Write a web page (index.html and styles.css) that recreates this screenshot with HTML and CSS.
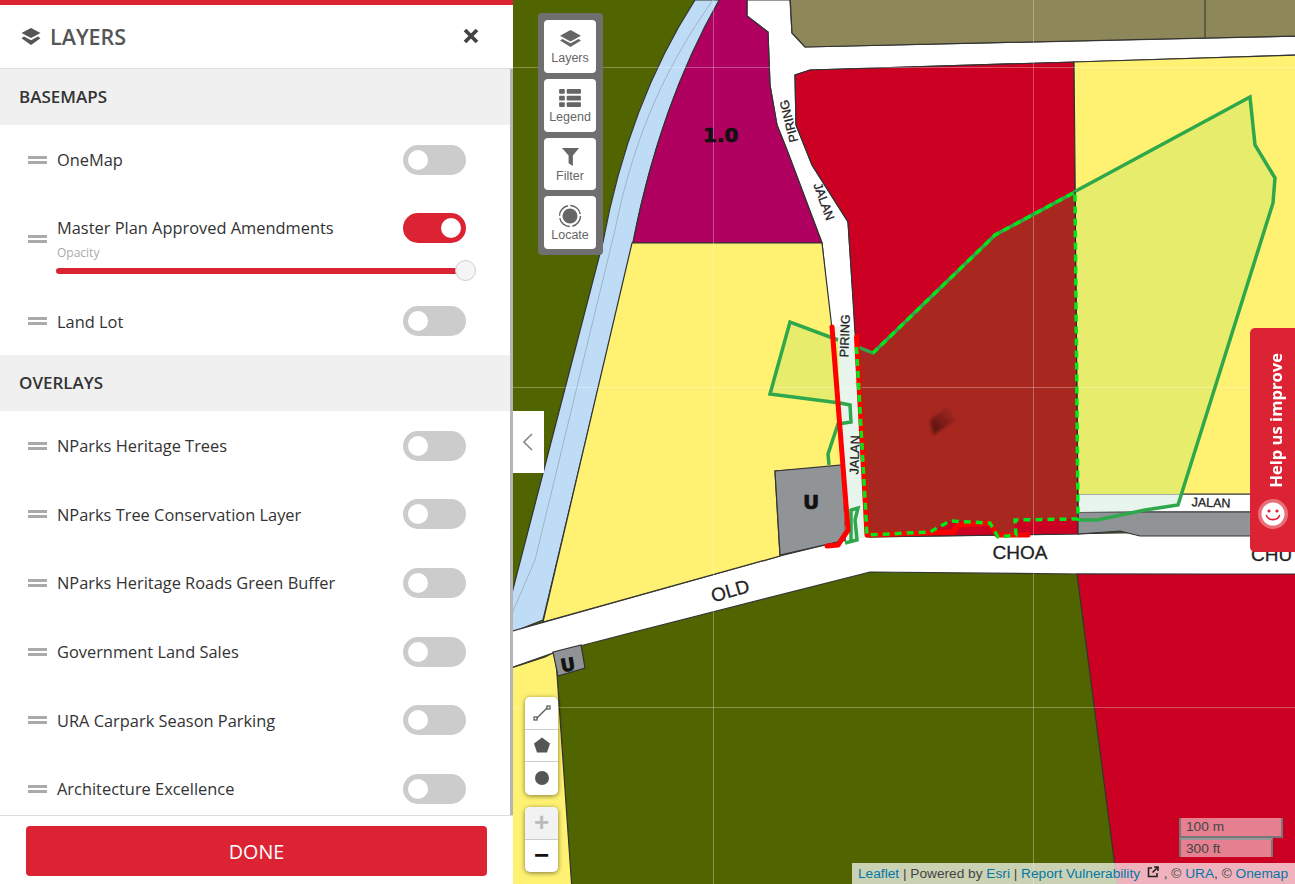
FILE: index.html
```html
<!DOCTYPE html>
<html lang="en">

<head>
    <meta charset="UTF-8">
    <meta name="viewport" content="width=device-width, initial-scale=1.0">
    <title>Layers</title>
    <link rel="stylesheet" href="styles.css">
</head>

<body>
    <div class="app">
        <!-- side panel -->
        <div class="panel">
            <div class="panel-head">
                <div class="panel-title">
                    <svg class="title-icon" viewBox="0 0 20 17">
                        <path d="M10 0l9.5 5L10 10 .5 5z" />
                        <path d="M3 8.6l7 3.6 7-3.6 2.5 1.6L10 17 .5 10.2z" />
                    </svg>
                    LAYERS
                </div>
                <svg class="close-icon" viewBox="0 0 16 16">
                    <path d="M2 2l12 12M14 2L2 14" />
                </svg>
            </div>
            <div class="panel-list">
                <div class="section">BASEMAPS</div>
                <div class="row">
                    <div class="handle"></div>
                    <div class="row-body">
                        <div class="row-top"><span>OneMap</span>
                            <div class="toggle"></div>
                        </div>
                    </div>
                </div>
                <div class="row row-open">
                    <div class="handle"></div>
                    <div class="row-body">
                        <div class="row-top"><span>Master Plan Approved Amendments</span>
                            <div class="toggle on"></div>
                        </div>
                        <div class="opacity-label">Opacity</div>
                        <div class="slider">
                            <div class="slider-thumb"></div>
                        </div>
                    </div>
                </div>
                <div class="row">
                    <div class="handle"></div>
                    <div class="row-body">
                        <div class="row-top"><span>Land Lot</span>
                            <div class="toggle"></div>
                        </div>
                    </div>
                </div>
                <div class="section">OVERLAYS</div>
                <div class="row">
                    <div class="handle"></div>
                    <div class="row-body">
                        <div class="row-top"><span>NParks Heritage Trees</span>
                            <div class="toggle"></div>
                        </div>
                    </div>
                </div>
                <div class="row">
                    <div class="handle"></div>
                    <div class="row-body">
                        <div class="row-top"><span>NParks Tree Conservation Layer</span>
                            <div class="toggle"></div>
                        </div>
                    </div>
                </div>
                <div class="row">
                    <div class="handle"></div>
                    <div class="row-body">
                        <div class="row-top"><span>NParks Heritage Roads Green Buffer</span>
                            <div class="toggle"></div>
                        </div>
                    </div>
                </div>
                <div class="row">
                    <div class="handle"></div>
                    <div class="row-body">
                        <div class="row-top"><span>Government Land Sales</span>
                            <div class="toggle"></div>
                        </div>
                    </div>
                </div>
                <div class="row">
                    <div class="handle"></div>
                    <div class="row-body">
                        <div class="row-top"><span>URA Carpark Season Parking</span>
                            <div class="toggle"></div>
                        </div>
                    </div>
                </div>
                <div class="row">
                    <div class="handle"></div>
                    <div class="row-body">
                        <div class="row-top"><span>Architecture Excellence</span>
                            <div class="toggle"></div>
                        </div>
                    </div>
                </div>
            </div>
            <div class="panel-foot">
                <div class="done-btn">DONE</div>
            </div>
        </div>

        <!-- map -->
        <div class="map">
            <svg class="map-art" viewBox="513 0 782 884">
                <defs>
                    <filter id="soft">
                        <feGaussianBlur stdDeviation="1.5" />
                    </filter>
                    <linearGradient id="blob" x1="0" y1="1" x2="1" y2="0">
                        <stop offset="0.2" stop-color="#641410" />
                        <stop offset="0.9" stop-color="#a82820" />
                    </linearGradient>
                </defs>
                <rect x="513" y="0" width="782" height="884" fill="#506400" />

                <!-- river -->
                <path class="edge" fill="#bedcf5" d="M695 0H722C690 50 655 130 633 242L543 620 505 635V620L603 242C620 150 650 70 695 0z" />
                <path fill="none" stroke="#9fb4c4" stroke-width="1" d="M713 0C670 60 635 130 615 230L535 560 505 630" />

                <!-- roads -->
                <path class="edge" fill="#fff" d="M747 0H790L792 33 805 47 1300 36V55L1074 62 810 70 795 75 796 125 812 165 848 222 856 340 870 537 1300 530V575L1080 574 870 572 630 633 553 653 505 670V633L780 556 845 540 830 320 822 243 787 150 777 125 770 85 768 32 747 16z" />
                <path class="edge" fill="#fff" d="M1078 494H1300V512H1078z" />

                <!-- zones -->
                <path class="edge" fill="#8d8759" d="M790 -5H1300V36L1205 38 805 47 792 33z" />
                <path fill="none" stroke="#333" stroke-width="1" d="M1205 0V38" />
                <path class="edge" fill="#b00060" d="M720 -5H747V16L768 32 770 85 777 125 787 150 822 243H633C655 130 690 50 722 -5z" />
                <path class="edge" fill="#cc0022" d="M795 75L810 70 1074 62 1078 534 867 537 853 300 848 222 812 165 796 125z" />
                <path class="edge" fill="#fff272" d="M1074 62L1300 55V494H1078z" />
                <path class="edge" fill="#fff272" d="M632 243H822L831 320 845 466 775 471 780 556 543 622z" />
                <path class="edge" fill="#909496" d="M1078 512H1300V536H1140L1120 531 1078 534z" />
                <path class="edge" fill="#cc0022" d="M1077 574H1300V890H1118z" />
                <path class="edge" fill="#909496" d="M775 471L842 465 846 540 780 555z" />
                <path class="edge" fill="#fff272" d="M505 670L545 657 553 653 556 660 572 890H505z" />
                <path class="edge" fill="#909496" d="M553 652L581 645 585 668 558 676z" />
                <path fill="#e8f5ec" d="M833 325L854 330 868 537 846 541z" />
                <path fill="#e8f5ec" d="M1079 494.5H1181L1178 505 1145 511 1079 512z" />

                <!-- selected area -->
                <path fill="#e8ec6c" d="M1076 192L1250 97 1255 145 1275 178 1273 203 1181 494 1079 494z" />
                <path fill="#e8ec6c" d="M790 322L838 340 840 403 770 394z" />
                <path fill="#a82820" d="M858 347L873 353 995 235 1075 192 1078 519 1015 520 1015 536 1000 536 990 522 950 521 935 530 870 536z" />
                <path d="M930 420L933 435 957 420 947 407z" fill="url(#blob)" filter="url(#soft)" />

                <!-- grid -->
                <path fill="none" stroke="#fff" stroke-opacity=".3" d="M513 67.5H1295M513 387.5H1295M513 707.5H1295M713.5 0V884M1033.5 0V884" />

                <!-- green outlines -->
                <path class="green" d="M1074 192L1250 97 1255 145 1275 178 1273 203 1178 505 1145 510 1097 520 1078 520" />
                <path class="green" d="M838 340L790 322 770 394 840 403 850 405 851 422 838 424 828 454 829 465" />
                <path class="green" d="M851 540L851 510 858 508 855 520 857 540 845 543" />
                <path class="green" d="M858 347L873 353 995 235 1075 192" />
                <path fill="none" stroke="#222" stroke-width="1" d="M1075 192L1078 519" />

                <!-- red lines -->
                <path class="red" d="M832 327L848 530 838 545 827 546" />
                <path class="red" d="M856.5 337L867 535 953 532 958 525 990 523 997 535 1028 535" />
                <path class="dash" d="M856.5 347L867 535 930 532 950 521 990 523 998 537 1016 535 1015 520 1078 519 1075 192 995 235 873 353" />

                <!-- road labels -->
                <text class="road-big" x="703" y="142">1.0</text>
                <text class="road" transform="translate(793 120) rotate(-104)" text-anchor="middle">PIRING</text>
                <text class="road" transform="translate(820 203) rotate(70)" text-anchor="middle">JALAN</text>
                <text class="road" transform="translate(849 336) rotate(-88)" text-anchor="middle">PIRING</text>
                <text class="road" transform="translate(859 455) rotate(-88)" text-anchor="middle">JALAN</text>
                <text class="road" x="1211" y="507" text-anchor="middle" transform="rotate(2 1211 503)">JALAN</text>
                <text class="road-name" x="1020" y="559" text-anchor="middle">CHOA</text>
                <text class="road-name" x="1251" y="561">CHU</text>
                <text class="road-name" transform="translate(732 597) rotate(-16)" text-anchor="middle">OLD</text>
                <text class="road-big" x="803" y="509">U</text>
                <text class="road-big small" transform="translate(569 671) rotate(-10)" text-anchor="middle">U</text>
            </svg>

            <div class="collapse-tab">
                <svg viewBox="0 0 10 18">
                    <path d="M9 1L1 9l8 8" />
                </svg>
            </div>

            <div class="toolbar">
                <div class="tool">
                    <svg viewBox="0 0 24 20">
                        <path d="M12 0l11 6-11 6L1 6z" />
                        <path d="M3.5 9.5l8.5 4.5 8.5-4.5L23 11l-11 7L1 11z" />
                    </svg>
                    <span>Layers</span>
                </div>
                <div class="tool">
                    <svg viewBox="0 0 24 20">
                        <rect x="0" y="0" width="6" height="5" rx="1" />
                        <rect x="8" y="0" width="15" height="5" rx="1" />
                        <rect x="0" y="7" width="6" height="5" rx="1" />
                        <rect x="8" y="7" width="15" height="5" rx="1" />
                        <rect x="0" y="14" width="6" height="5" rx="1" />
                        <rect x="8" y="14" width="15" height="5" rx="1" />
                    </svg>
                    <span>Legend</span>
                </div>
                <div class="tool">
                    <svg viewBox="0 0 24 20">
                        <path d="M3 0H21L14.5 8V19L10 16V8z" />
                    </svg>
                    <span>Filter</span>
                </div>
                <div class="tool">
                    <svg viewBox="0 0 24 24" class="locate">
                        <circle cx="12" cy="12" r="7.5" />
                        <circle cx="12" cy="12" r="10.5" fill="none" stroke="#666" stroke-width="1.4" stroke-dasharray="14 2.5" />
                    </svg>
                    <span>Locate</span>
                </div>
            </div>

            <div class="map-btns draw-btns">
                <div class="map-btn">
                    <svg viewBox="0 0 18 18" class="line-icon">
                        <path d="M3 15L15 3" />
                        <rect x="1" y="13" width="3" height="3" />
                        <rect x="14" y="2" width="3" height="3" />
                    </svg>
                </div>
                <div class="map-btn">
                    <svg viewBox="0 0 18 18">
                        <path d="M9 1.5L17 7.5 14 16.5 4 16.5 1 7.5z" />
                    </svg>
                </div>
                <div class="map-btn">
                    <svg viewBox="0 0 18 18">
                        <circle cx="9" cy="9" r="7" />
                    </svg>
                </div>
            </div>

            <div class="map-btns zoom-btns">
                <div class="map-btn zoom-in">+</div>
                <div class="map-btn zoom-out">&minus;</div>
            </div>

            <div class="help-tab">
                <span class="help-text">Help us improve</span>
                <svg class="smiley" viewBox="0 0 30 30">
                    <circle cx="15" cy="15" r="15" fill="#fff" fill-opacity=".35" />
                    <circle cx="15" cy="15" r="11.5" fill="#fff" />
                    <circle cx="11" cy="12" r="1.6" fill="#dc2334" />
                    <circle cx="19" cy="12" r="1.6" fill="#dc2334" />
                    <path d="M8.5 16.5c2 5.5 11 5.5 13 0" fill="none" stroke="#dc2334" stroke-width="1.6" stroke-linecap="round" />
                </svg>
            </div>

            <div class="scale">
                <div class="scale-line scale-m">100 m</div>
                <div class="scale-line scale-ft">300 ft</div>
            </div>

            <div class="attribution">
                <a>Leaflet</a> | Powered by <a>Esri</a> | <a>Report Vulnerability</a>
                <svg class="ext-icon" viewBox="0 0 12 12">
                    <path d="M5 2H1.5v8.5H10V7M7 1h4v4M11 1L5.5 6.5" />
                </svg>
                , &copy; <a>URA</a>, &copy; <a>Onemap</a>
            </div>
        </div>
    </div>
</body>

</html>
```

FILE: styles.css
```css
* {
    margin: 0;
    padding: 0;
    box-sizing: border-box;
}

body {
    font-family: "Open Sans", "Noto Sans", sans-serif;
    color: #333;
    overflow: hidden;
}

.app {
    display: flex;
    height: 884px;
}

/* panel */
.panel {
    flex: 0 0 513px;
    display: flex;
    flex-direction: column;
    background-color: #fff;
    border-top: 5px solid #dc2334;
}

.panel-head {
    flex: 0 0 64px;
    display: flex;
    align-items: center;
    justify-content: space-between;
    padding: 0 34px 1px 21px;
    border-bottom: 1px solid #ddd;
}

.panel-title {
    display: flex;
    align-items: center;
    gap: 9px;
    font-size: 21.5px;
    font-weight: 600;
    color: #555;
}

.title-icon {
    width: 20px;
    height: 17px;
    fill: #555;
}

.close-icon {
    width: 16px;
    height: 16px;
    fill: none;
    stroke: #444;
    stroke-width: 3.8;
}

.panel-list {
    flex: 1;
    min-height: 0;
    overflow: hidden;
    border-right: 3px solid #b5b5b5;
}

.section {
    height: 56px;
    line-height: 56px;
    padding-left: 19px;
    font-size: 17px;
    font-weight: 600;
    color: #333;
    background-color: #f0f0f0;
}

.row {
    display: flex;
    align-items: center;
    height: 68.6px;
    padding: 1.4px 44px 0 28px;
}

.row-open {
    align-items: flex-start;
    height: 92.6px;
    padding-top: 19px;
}

.row-open .handle {
    margin-top: 22px;
}

.handle {
    flex: 0 0 19px;
    height: 8px;
    margin-right: 9px;
    border-top: 3px solid #aaa;
    border-bottom: 3px solid #aaa;
}

.row-body {
    flex: 1;
    font-size: 16.4px;
    color: #333;
}

.row-top {
    display: flex;
    align-items: center;
    justify-content: space-between;
}

.row-top span {
    margin-left: 1px;
}

.toggle {
    position: relative;
    width: 63px;
    height: 30px;
    border-radius: 15px;
    background-color: #ccc;
}

.toggle::after {
    content: "";
    position: absolute;
    top: 5px;
    left: 5px;
    width: 20px;
    height: 20px;
    border-radius: 50%;
    background-color: #fff;
}

.toggle.on {
    background-color: #dc2334;
}

.toggle.on::after {
    left: 38px;
}

.opacity-label {
    margin: 2px 0 0 1px;
    font-size: 12px;
    line-height: 16px;
    color: #aaa;
}

.slider {
    position: relative;
    height: 6px;
    margin-top: 7px;
    width: 409px;
    border-radius: 3px;
    background-color: #dc2334;
}

.slider-thumb {
    position: absolute;
    top: -8px;
    right: -11px;
    width: 21px;
    height: 21px;
    border: 1px solid #ccc;
    border-radius: 50%;
    background-color: #f5f5f5;
}

.panel-foot {
    flex: 0 0 69px;
    padding: 10px 26px 0;
    border-top: 1px solid #ddd;
}

.done-btn {
    height: 50px;
    line-height: 52px;
    text-align: center;
    font-size: 19.7px;
    color: #fff;
    border-radius: 4px;
    background-color: #dc2334;
}

/* map */
.map {
    position: relative;
    flex: 1;
    overflow: hidden;
    font-family: "Liberation Sans", Arial, sans-serif;
}

.map-art {
    display: block;
    width: 782px;
    height: 884px;
}

.edge {
    stroke: #333;
    stroke-width: 1.2;
}

.green {
    fill: none;
    stroke: #2ea84a;
    stroke-width: 3.5;
}

.red {
    fill: none;
    stroke: #ff0000;
    stroke-width: 5;
    stroke-linecap: round;
    stroke-linejoin: round;
}

.dash {
    fill: none;
    stroke: #00e81a;
    stroke-width: 3.5;
    stroke-dasharray: 7 5;
}

.road {
    font-size: 12.5px;
    fill: #222;
    stroke: #222;
    stroke-width: .3;
    font-family: "Liberation Sans", sans-serif;
}

.road-name {
    font-size: 19px;
    fill: #222;
    stroke: #222;
    stroke-width: .3;
    font-family: "Liberation Sans", sans-serif;
}

.road-big {
    font-size: 20px;
    font-weight: 700;
    fill: #111;
    stroke: #111;
    stroke-width: .7;
    font-family: "DejaVu Sans", sans-serif;
}

.road-big.small {
    font-size: 18px;
}

.collapse-tab {
    position: absolute;
    left: 0;
    top: 411px;
    display: flex;
    align-items: center;
    justify-content: center;
    width: 31px;
    height: 62px;
    padding-right: 2px;
    background-color: #fff;
}

.collapse-tab svg {
    width: 10px;
    height: 18px;
    fill: none;
    stroke: #888;
    stroke-width: 1.6;
}

.toolbar {
    position: absolute;
    left: 25px;
    top: 13px;
    display: flex;
    flex-direction: column;
    gap: 6px;
    width: 65px;
    padding: 7px 7px 6px 6px;
    border-radius: 4px;
    background-color: #6f6f6f;
}

.tool {
    display: flex;
    flex-direction: column;
    align-items: center;
    justify-content: flex-end;
    height: 52.8px;
    padding-bottom: 7.5px;
    border-radius: 4px;
    background-color: #fff;
    font-size: 12.5px;
    line-height: 13px;
    color: #666;
}

.tool svg {
    width: 23px;
    height: 19px;
    margin-bottom: 3px;
    fill: #666;
}

.tool svg.locate {
    width: 24px;
    height: 24px;
    margin-bottom: 1px;
}

.map-btns {
    position: absolute;
    left: 12px;
    width: 33px;
    border-radius: 5px;
    overflow: hidden;
    background-color: #fff;
    box-shadow: 0 1px 5px rgba(0, 0, 0, 0.5);
}

.draw-btns {
    top: 697px;
}

.zoom-btns {
    top: 807px;
}

.map-btn {
    display: flex;
    align-items: center;
    justify-content: center;
    height: 32.5px;
    border-bottom: 1px solid #ccc;
}

.map-btn:last-child {
    border-bottom: 0;
}

.map-btn svg {
    width: 18px;
    height: 18px;
    fill: #555;
}

.map-btn svg.line-icon {
    fill: #fff;
    stroke: #555;
    stroke-width: 1.2;
}

.zoom-in {
    font-size: 26px;
    font-weight: 700;
    color: #bbb;
    background-color: #f2f2f2;
}

.zoom-out {
    font-size: 26px;
    font-weight: 700;
    color: #111;
}

.help-tab {
    position: absolute;
    right: 0;
    top: 328px;
    display: flex;
    flex-direction: column;
    align-items: center;
    justify-content: flex-end;
    width: 45px;
    height: 224px;
    padding: 0 0 23px;
    border-radius: 5px 0 0 5px;
    background-color: #dc2334;
}

.help-text {
    writing-mode: vertical-rl;
    transform: rotate(180deg);
    margin: 0 0 11px 6px;
    font-family: "Open Sans", sans-serif;
    font-size: 16.6px;
    font-weight: 700;
    color: #fff;
}

.smiley {
    width: 30px;
    height: 30px;
}

.scale {
    position: absolute;
    left: 666px;
    top: 818px;
}

.scale-line {
    height: 20px;
    padding-left: 5px;
    font-size: 13.7px;
    line-height: 18px;
    color: #444;
    background-color: rgba(255, 255, 255, 0.5);
    border: 2px solid #777;
    border-top: 0;
}

.scale-m {
    width: 104px;
}

.scale-ft {
    width: 94px;
    border-top: 2px solid #999;
    border-bottom: 0;
    height: 19px;
    line-height: 17px;
}

.attribution {
    position: absolute;
    right: 0;
    bottom: 0;
    width: 443px;
    height: 21px;
    line-height: 21px;
    padding-left: 6px;
    white-space: nowrap;
    font-size: 13.7px;
    color: #444;
    background-color: rgba(255, 255, 255, 0.7);
}

.attribution a {
    color: #0078a8;
}

.ext-icon {
    width: 12px;
    height: 12px;
    margin: 0 1px 0 3px;
    fill: none;
    stroke: #222;
    stroke-width: 1.6;
}
```
